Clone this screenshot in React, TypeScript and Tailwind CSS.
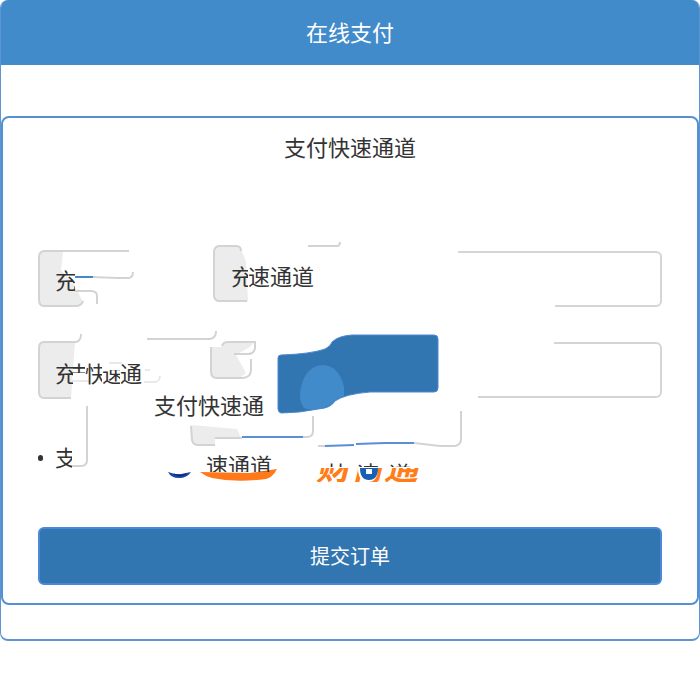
import React, { useState } from "react";

const LINE = "#d3d3d3";
const FILL = "#ececec";
const BLUE = "#5a8fd8";

// coordinates of every drawing are counted from the top left of the page
const AccountPieces: React.FC = () => (
  <svg className="absolute left-0 -top-3 pointer-events-none" width="420" height="80" viewBox="38 239 420 80" fill="none" strokeWidth="2" stroke={LINE} aria-hidden="true">
    <path d="M44 252H63L61 270L74 285L83 302L78 307H44Q39 306 39 301V257Q39 252 44 252Z" fill={FILL} stroke="none" />
    <path d="M129 251H44Q39 252 39 257V300Q39 306 44 306H77Q82 305 83 301" />
    <path d="M92 277L118 278H129Q133 277 133 272" />
    <path d="M75 291H91Q97 291 97 296V304" />
    <path d="M219 247H240L243 254L246 262L248 301H219Q215 300 215 295V251Q215 247 219 247Z" fill={FILL} stroke="none" />
    <path d="M241 251Q241 246 236 246H219Q214 247 214 252V296Q215 301 219 301H247" />
    <path d="M308 246H337Q340 246 340 242" />
  </svg>
);

const AccountLine: React.FC = () => (
  <svg className="absolute left-9 top-6 pointer-events-none" width="20" height="4" viewBox="0 0 20 4" aria-hidden="true">
    <path d="M1 2H19" stroke="#4389ca" strokeWidth="2" />
  </svg>
);

const AmountPieces: React.FC = () => (
  <svg className="absolute left-0 -top-4 pointer-events-none" width="420" height="80" viewBox="38 326 420 80" fill="none" strokeWidth="2" stroke={LINE} aria-hidden="true">
    <path d="M44 342H75L71 398H44Q39 397 39 392V348Q39 343 44 342Z" fill={FILL} stroke="none" />
    <path d="M81 334Q81 341 76 342H44Q39 342 39 348V392Q39 398 44 398H71" />
    <path d="M147 339H210Q216 338 216 331" />
    <path d="M210 347H222L236 355L246 373L240 378H216Q211 377 211 372Z" fill={FILL} stroke="none" />
    <path d="M222 346L226 342H254L250 347L236 355H222Z" fill={FILL} stroke="none" />
    <path d="M211 347V371Q211 378 217 378H243Q251 377 251 370V359" />
    <path d="M222 346Q223 342 228 342H255V348Q254 354 248 354H234" />
    <path d="M109 363H122M72 381H90M145 370H150M144 382H154Q160 382 160 376" strokeWidth="1" />
  </svg>
);

const OptionPieces: React.FC = () => (
  <svg className="absolute left-0 -top-10 pointer-events-none" width="430" height="82" viewBox="38 402 430 82" fill="none" strokeWidth="2" stroke={LINE} aria-hidden="true">
    <path d="M87 406V460Q87 466 81 466H70" />
    <path d="M191 425L237 429L241 438L215 439V445H197Q191 444 191 438Z" fill={FILL} stroke="none" />
    <path d="M191 426L192 440Q193 445 198 445H215M215 438H242" />
    <path d="M242 437H303" stroke={BLUE} />
    <path d="M303 437H307Q313 437 313 431V416" />
    <path d="M318 446H325" />
    <path d="M325 446L354 445M356 444L385 443H414" stroke={BLUE} />
    <path d="M414 443L440 446H455Q461 445 461 439V411" />
    <path d="M168 472L175 474H181L191 472Q187 478 179 478Q171 478 168 472Z" fill="#1746a8" stroke="none" />
    <path d="M174 474L180 476L186 474" stroke="#0b1f70" strokeWidth="1" />
    <path d="M200 472L250 473L277 469Q273 477 266 479Q236 483 212 478Q205 476 200 472Z" fill="#ff7819" stroke="none" />
  </svg>
);

const App: React.FC = () => {
  const [account, setAccount] = useState("");
  const [amount, setAmount] = useState("");

  return (
    <main className="min-h-screen bg-white text-[22px] leading-7 text-[#333] font-['Noto_Sans_CJK_SC',sans-serif]">
      <section className="border-x border-b-2 border-[#5c96d2] rounded-lg pb-[34px] overflow-hidden">
        <header className="h-[65px] pb-1 bg-[#428bca] text-white flex items-center justify-center">
          <h1>在线支付</h1>
        </header>

        <form className="mt-[51px] border-2 border-[#5690d3] rounded-lg px-[35px] pb-[18px]" onSubmit={(e) => e.preventDefault()}>
          <h2 className="mt-[14px] text-center">支付快速通道</h2>

          <div className="relative mt-[91px] h-14 flex">
            <AccountPieces />
            <label htmlFor="account" className="relative w-[420px] flex items-center pl-[17px]">
              <span className="w-5 overflow-hidden">充</span>
              <span className="ml-[156px] pb-2 flex">
                <span className="w-[17px] overflow-hidden">充</span>
                <span>速通道</span>
              </span>
            </label>
            <AccountLine />
            <input
              id="account"
              type="text"
              value={account}
              onChange={(e) => setAccount(e.target.value)}
              className="min-w-0 flex-1 px-3 border-y-2 border-r-2 border-[#d5d5d5] rounded-r-md outline-none"
            />
            <span className="absolute left-[420px] bottom-0 w-[97px] h-[2px] bg-white" />
          </div>

          <div className="relative mt-[35px] h-14 flex">
            <AmountPieces />
            <label htmlFor="amount" className="relative w-[440px] flex items-center pt-1 pl-[17px]">
              <span className="w-[18px] overflow-hidden">充</span>
              <span className="w-3 flex justify-center overflow-hidden [clip-path:inset(0_0_13px_0)]">支</span>
              <span className="w-[17px] overflow-hidden">快</span>
              <span className="w-[18px] overflow-hidden [clip-path:inset(12px_0_0_0)]">速</span>
              <span>通</span>
            </label>
            <input
              id="amount"
              type="text"
              value={amount}
              onChange={(e) => setAmount(e.target.value)}
              className="min-w-0 flex-1 px-3 border-y-2 border-r-2 border-[#d5d5d5] rounded-r-md outline-none"
            />
            <span className="absolute left-[440px] top-0 w-[76px] h-[2px] bg-white" />
            <button type="button" aria-label="充值" className="absolute left-[239px] -top-2 z-10">
              <svg width="162" height="80" viewBox="277 334 162 80" aria-hidden="true">
                <path
                  d="M281 355Q311 354 325 349Q331 346 332 342Q338 336 352 335H434Q438 335 438 339V388Q438 392 434 392H370Q345 394 335 401Q331 408 318 409Q299 413 281 413Q278 412 278 409V358Q278 355 281 355Z"
                  fill="#3276b1"
                  stroke="#4c88d4"
                />
                <path d="M304 408Q298 400 301 387Q306 366 323 365Q339 366 344 387V396Q337 398 333 403Q326 408 318 409Q311 411 304 408Z" fill="#428bca" />
              </svg>
            </button>
          </div>

          <p className="relative -mt-2 pl-[116px]">支付快速通</p>

          <ul className="relative mt-6 h-10">
            <OptionPieces />
            <li className="relative flex items-start">
              <span className="w-[17px] flex h-8 items-center">
                <span className="w-[5px] h-[6px] rounded-full bg-[#333]" />
              </span>
              <span className="w-[17px] overflow-hidden">支</span>
              <span className="ml-[134px] mt-2 h-[22px] overflow-hidden">速通道</span>
              <span className="relative ml-[44px] mt-[26px] w-[108px] h-[14px] overflow-hidden flex items-end">
                <span className="text-[34px] leading-[40px] -mb-1 font-bold italic text-[#ff7c16] whitespace-nowrap">财付通</span>
                <svg className="absolute left-10 top-0" width="26" height="14" viewBox="0 0 26 14" aria-hidden="true">
                  <path d="M2 0H22Q22 14 12 14Q2 14 2 0Z" fill="#fff" />
                  <path d="M4 0H22Q22 12 13 12Q4 12 4 0Z" fill="#1760b4" />
                  <path d="M10 1H16V6H10Z" fill="#fff" />
                </svg>
              </span>
              <span className="absolute left-[289px] top-4 h-[9px] overflow-hidden flex">
                <span className="w-[30px]">快</span>
                <span className="w-8">速</span>
                <span>道</span>
              </span>
            </li>
          </ul>

          <button type="submit" className="mt-[45px] w-full h-[58px] rounded-md border-2 border-[#4b88d5] bg-[#3276b1] text-white text-xl">
            提交订单
          </button>
        </form>
      </section>
    </main>
  );
};

export default App;
